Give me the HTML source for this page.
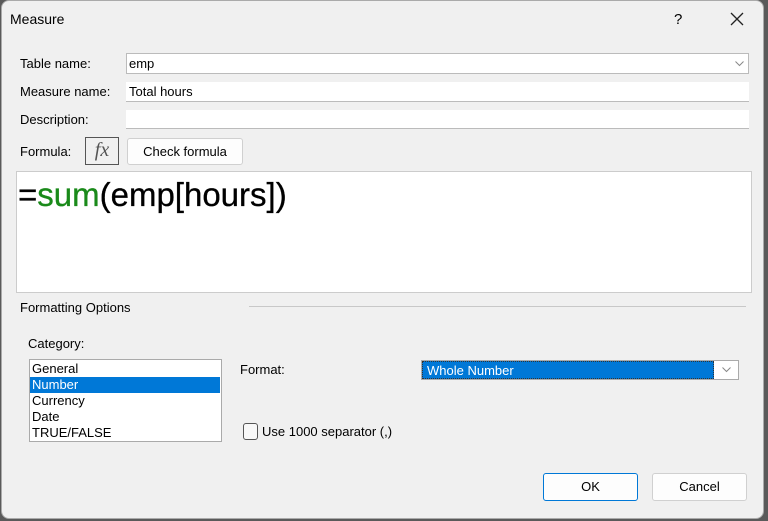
<!DOCTYPE html>
<html><head><style>
*{box-sizing:border-box;margin:0;padding:0}
body{width:768px;height:521px;background:#5a5a5a;position:relative;overflow:hidden;font-family:"Liberation Sans",sans-serif;font-size:13px;color:#000}
.win{position:absolute;left:1px;top:0;width:763px;height:519px;background:#f0f0f0;border:1px solid #aaa;border-radius:8px}
.a{position:absolute}
.in{position:absolute;background:#fff;border-bottom:1px solid #bbb}
.lbl{position:absolute;line-height:16px}
.btn{position:absolute;background:#fdfdfd;border:1px solid #d0d0d0;border-radius:3px;text-align:center}
</style></head><body>
<div class="win"></div>
<div class="lbl" style="left:10px;top:11px;font-size:14px">Measure</div>
<div class="lbl" style="left:674px;top:12px;font-size:15px">?</div>
<svg class="a" style="left:730px;top:12px" width="14" height="14"><path d="M1 1L13 13M13 1L1 13" stroke="#222" stroke-width="1.3"/></svg>

<div class="lbl" style="left:20px;top:56px">Table name:</div>
<div class="in" style="left:126px;top:53px;width:623px;height:21px;border:1px solid #bbb"></div>
<div class="lbl" style="left:129px;top:56px">emp</div>
<svg class="a" style="left:735px;top:61px" width="9" height="6"><path d="M0.5 0.5L4.5 4.5L8.5 0.5" stroke="#888" fill="none"/></svg>
<div class="lbl" style="left:20px;top:84px">Measure name:</div>
<div class="in" style="left:126px;top:82px;width:623px;height:20px"></div>
<div class="lbl" style="left:129px;top:84px">Total hours</div>
<div class="lbl" style="left:20px;top:112px">Description:</div>
<div class="in" style="left:126px;top:110px;width:623px;height:19px"></div>

<div class="lbl" style="left:20px;top:144px">Formula:</div>
<div class="a" style="left:85px;top:137px;width:34px;height:28px;border:1px solid #555;background:#f0f0f0;font-family:'Liberation Serif',serif;font-style:italic;font-size:20px;color:#555;text-align:center;line-height:25px">fx</div>
<div class="btn" style="left:127px;top:138px;width:116px;height:27px;line-height:25px">Check formula</div>

<div class="a" style="left:16px;top:171px;width:736px;height:122px;background:#fff;border:1px solid #ccc"></div>
<div class="a" style="left:18px;top:176px;font-size:33px;line-height:38px;-webkit-text-stroke:0.3px #000">=<span style="color:#1a8a1a;-webkit-text-stroke:0.3px #1a8a1a">sum</span>(emp[hours])</div>

<div class="lbl" style="left:20px;top:300px">Formatting Options</div>
<div class="a" style="left:249px;top:306px;width:497px;height:1px;background:#c8c8c8"></div>
<div class="lbl" style="left:28px;top:336px">Category:</div>
<div class="a" style="left:29px;top:359px;width:193px;height:83px;background:#fff;border:1px solid #aaa"></div>
<div class="a" style="left:30px;top:377px;width:190px;height:16px;background:#0078d7"></div>
<div class="lbl" style="left:32px;top:361px;line-height:16px">General<br><span style="color:#fff">Number</span><br>Currency<br>Date<br>TRUE/FALSE</div>

<div class="lbl" style="left:240px;top:362px">Format:</div>
<div class="a" style="left:421px;top:360px;width:318px;height:20px;background:#fff;border:1px solid #aaa"></div>
<div class="a" style="left:422px;top:361px;width:292px;height:18px;background:#0078d7;color:#fff;padding-left:4px;line-height:17px;border:1px dotted #333">Whole Number</div>
<svg class="a" style="left:722px;top:367px" width="9" height="6"><path d="M0.5 0.5L4.5 4.5L8.5 0.5" stroke="#888" fill="none"/></svg>

<div class="a" style="left:243px;top:423px;width:15px;height:17px;border:1px solid #555;border-radius:3px;background:#f8f8f8"></div>
<div class="lbl" style="left:262px;top:424px">Use 1000 separator (,)</div>

<div class="btn" style="left:543px;top:473px;width:95px;height:28px;line-height:26px;border-color:#0078d7">OK</div>
<div class="btn" style="left:652px;top:473px;width:95px;height:28px;line-height:26px">Cancel</div>
</body></html>
